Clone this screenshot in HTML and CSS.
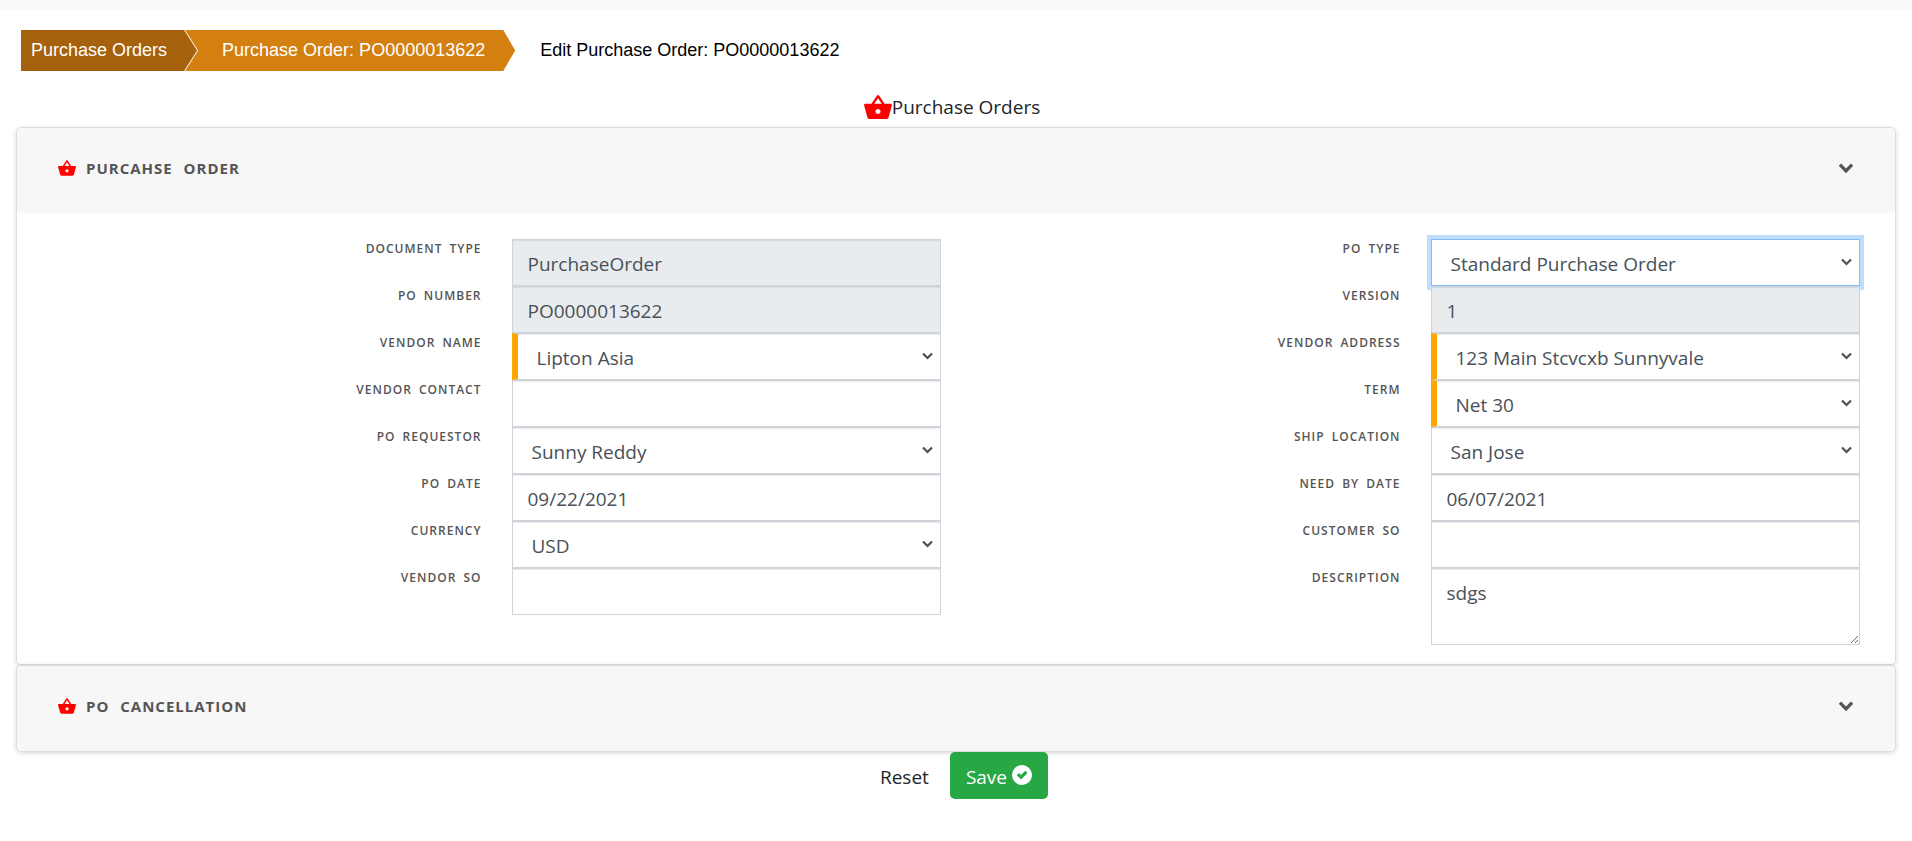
FILE: index.html
```html
<!DOCTYPE html>
<html lang="en">
<head>
<meta charset="utf-8">
<title>Edit Purchase Order: PO0000013622</title>
<link rel="stylesheet" href="styles.css">
</head>
<body>
<svg class="symbols" aria-hidden="true">
  <symbol id="basket" viewBox="1 2 22 19">
    <path d="M17.21 9l-4.38-6.56c-.19-.28-.51-.42-.83-.42-.32 0-.64.14-.83.43L6.79 9H2c-.55 0-1 .45-1 1 0 .09.01.18.04.27l2.54 9.27c.23.84 1 1.46 1.92 1.46h13c.92 0 1.69-.62 1.93-1.46l2.54-9.27L23 10c0-.55-.45-1-1-1h-4.79zM9 9l3-4.4L15 9H9zm3 8c-1.1 0-2-.9-2-2s.9-2 2-2 2 .9 2 2-.9 2-2 2z"/>
  </symbol>
  <symbol id="chevron" viewBox="0 0 14 10">
    <path d="M1.5 1.5L7 7.2l5.500-5.700" fill="none" stroke="currentColor" stroke-width="3"/>
  </symbol>
  <symbol id="check" viewBox="0 0 20 20">
    <path fill-rule="evenodd" d="M10 0a10 10 0 1 0 0 20a10 10 0 1 0 0-20zM4.800 10.300l2.200-2.200 2 2 4.300-4.300 2.200 2.200-6.500 6.500z"/>
  </symbol>
</svg>
<div class="top-strip"></div>
<nav class="crumbs" aria-label="Breadcrumb">
  <a class="crumb crumb-first" href="#">Purchase Orders</a>
  <a class="crumb crumb-second" href="#">Purchase Order: PO0000013622</a>
  <span class="crumb crumb-current">Edit Purchase Order: PO0000013622</span>
</nav>
<main class="page">
  <h1 class="page-title"><svg class="title-icon"><use href="#basket"/></svg>Purchase Orders</h1>
  <form class="po-form">
    <section class="card">
      <header class="card-header">
        <svg class="card-icon"><use href="#basket"/></svg>
        <h2 class="card-title">Purcahse Order</h2>
        <button class="toggle" type="button" aria-label="Collapse"><svg class="chevron"><use href="#chevron"/></svg></button>
      </header>
      <div class="card-body">
        <div class="fields">
          <label class="label" for="doctype">Document Type</label>
          <input class="control" id="doctype" value="PurchaseOrder" readonly>
          <label class="label" for="ponum">PO Number</label>
          <input class="control" id="ponum" value="PO0000013622" readonly>
          <label class="label" for="vendor">Vendor Name</label>
          <select class="control required" id="vendor"><option>Lipton Asia</option></select>
          <label class="label" for="contact">Vendor Contact</label>
          <input class="control" id="contact">
          <label class="label" for="requestor">PO Requestor</label>
          <select class="control" id="requestor"><option>Sunny Reddy</option></select>
          <label class="label" for="podate">PO Date</label>
          <input class="control" id="podate" value="09/22/2021">
          <label class="label" for="currency">Currency</label>
          <select class="control" id="currency"><option>USD</option></select>
          <label class="label" for="vendorso">Vendor SO</label>
          <input class="control" id="vendorso">
        </div>
        <div class="fields">
          <label class="label" for="potype">PO Type</label>
          <select class="control" id="potype" autofocus><option>Standard Purchase Order</option></select>
          <label class="label" for="version">Version</label>
          <input class="control" id="version" value="1" readonly>
          <label class="label" for="address">Vendor Address</label>
          <select class="control required" id="address"><option>123 Main Stcvcxb Sunnyvale</option></select>
          <label class="label" for="term">Term</label>
          <select class="control required" id="term"><option>Net 30</option></select>
          <label class="label" for="ship">Ship Location</label>
          <select class="control" id="ship"><option>San Jose</option></select>
          <label class="label" for="needby">Need By Date</label>
          <input class="control" id="needby" value="06/07/2021">
          <label class="label" for="customerso">Customer SO</label>
          <input class="control" id="customerso">
          <label class="label" for="description">Description</label>
          <textarea class="control control-area" id="description" rows="2">sdgs</textarea>
        </div>
      </div>
    </section>
    <section class="card">
      <header class="card-header">
        <svg class="card-icon"><use href="#basket"/></svg>
        <h2 class="card-title">PO Cancellation</h2>
        <button class="toggle" type="button" aria-label="Expand"><svg class="chevron"><use href="#chevron"/></svg></button>
      </header>
    </section>
    <div class="actions">
      <button class="btn" type="reset">Reset</button>
      <button class="btn btn-save" type="submit">Save<svg class="check"><use href="#check"/></svg></button>
    </div>
  </form>
</main>
</body>
</html>
```

FILE: styles.css
```css
*, *::before, *::after { box-sizing: border-box; }

body {
  margin: 0;
  background: #fff;
  color: #212529;
  font-family: "Open Sans", sans-serif;
  font-size: 19px;
  line-height: 30px;
}

.symbols { display: none; }

.top-strip {
  height: 10px;
  background: #f8f9fb;
}

/* Breadcrumb */
.crumbs {
  display: flex;
  padding: 20px 21px 0;
  font-family: "Liberation Sans", Arial, sans-serif;
  font-size: 18px;
  line-height: 41px;
}

.crumb {
  color: #fff;
  text-decoration: none;
}

.crumb-first {
  padding: 0 30px 0 10px;
  background: #a6610c;
  clip-path: polygon(0 0, calc(100% - 13px) 0, 100% 50%, calc(100% - 13px) 100%, 0 100%);
}

.crumb-second {
  margin-left: -12px;
  padding: 0 30px 0 37px;
  background: #d38010;
  clip-path: polygon(0 0, calc(100% - 12px) 0, 100% 50%, calc(100% - 12px) 100%, 0 100%, 13px 50%);
}

.crumb-current {
  padding-left: 25px;
  color: #000;
}

/* Page */
.page { padding: 21px 16px 0; }

.page-title {
  display: flex;
  align-items: center;
  justify-content: center;
  margin: 0;
  padding: 0 8px 5px 0;
  font-size: 19px;
  font-weight: 400;
}

.title-icon {
  width: 28px;
  height: 24px;
  fill: #f00;
}

.po-form { margin: 0; }

/* Cards */
.card {
  border: 1px solid #ddd;
  border-radius: 5px;
  background: #fff;
  box-shadow: 0 1px 4px rgba(0, 0, 0, 0.16);
}

.card-header {
  display: flex;
  align-items: center;
  height: 85px;
  padding: 0 41px 5px;
  border-radius: 4px;
  background: #f7f7f7;
  color: #555;
}

.card-icon {
  width: 18px;
  height: 16px;
  fill: #f00;
}

.card-title {
  flex: 1;
  margin: 0 0 0 10px;
  font-size: 15px;
  font-weight: 700;
  letter-spacing: 1px;
  word-spacing: 6px;
  text-transform: uppercase;
}

.toggle {
  display: flex;
  padding: 0;
  border: 0;
  background: none;
  color: #555;
}

.chevron {
  width: 16px;
  height: 11px;
}

/* Fields */
.card-body {
  display: grid;
  grid-template-columns: 1fr 1fr;
  align-items: start;
  padding: 26px 20px 19px;
}

.fields {
  display: grid;
  grid-template-columns: 1fr 1fr;
}

.label {
  padding-right: 15px;
  color: #555;
  font-size: 12px;
  font-weight: 600;
  line-height: 20px;
  letter-spacing: 1px;
  word-spacing: 3px;
  text-align: right;
  text-transform: uppercase;
}

.control {
  display: block;
  width: calc(100% - 30px);
  height: 47px;
  margin: 0 15px;
  padding: 9px 15px 7px;
  border: 1px solid #ced4da;
  border-radius: 0;
  background: #fff;
  box-shadow: inset 0 1px 1px rgba(0, 0, 0, 0.08);
  color: #495057;
  font: inherit;
}

select.control {
  appearance: none;
  padding: 9px 24px 7px 19px;
  background: #fff url("data:image/svg+xml,%3Csvg xmlns='http://www.w3.org/2000/svg' width='11' height='8' viewBox='0 0 11 8'%3E%3Cpath d='M1 1.500L5.500 6L10 1.500' fill='none' stroke='%23495057' stroke-width='2.200'/%3E%3C/svg%3E") no-repeat right 7px top 18px;
}

.control:read-only:not(select) { background: #e9ecef; }

.control.required { border-left: 6px solid orange; }

.control:focus {
  outline: 0;
  border-color: #80bdff;
  box-shadow: 0 0 0 4px rgba(0, 123, 255, 0.25);
}

.control-area {
  height: 77px;
  resize: vertical;
}

/* Actions */
.actions {
  display: flex;
  justify-content: center;
  gap: 5px;
}

.btn {
  display: flex;
  align-items: center;
  gap: 5px;
  height: 47px;
  padding: 2px 16px 0;
  border: 0;
  border-radius: 5px;
  background: none;
  color: #212529;
  font: inherit;
}

.btn-save {
  background: #28a745;
  color: #fff;
}

.check {
  width: 20px;
  height: 20px;
  margin-bottom: 4px;
  fill: #fff;
}
```
